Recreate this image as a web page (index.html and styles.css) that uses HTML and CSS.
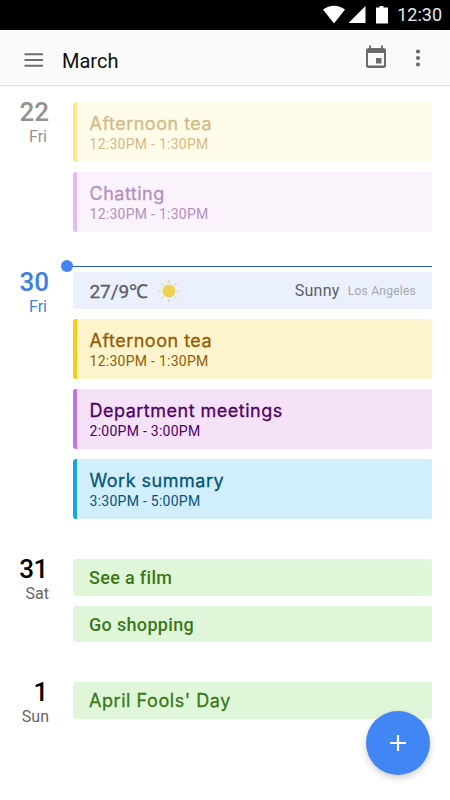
FILE: index.html
```html
<!DOCTYPE html>
<html lang="en">
<head>
<meta charset="utf-8">
<title>March</title>
<link rel="stylesheet" href="styles.css">
</head>
<body>
<div class="status">
  <svg class="signals" width="68" height="20" viewBox="0 0 68 20"><g fill="#fff"><path d="M0 4.500C6.500-.6 15.500-.6 22 4.500L11 18.500Z"/><path d="M42.500 1v17H25.500Z"/><path d="M56.500 1h4v1.500H65V18.500H53V2.500h3.500Z"/></g></svg>
  <span class="clock">12:30</span>
</div>
<header class="appbar">
  <svg class="menu" width="20" height="14" viewBox="0 0 20 14"><path d="M.500 1.300h18.500M.500 7h18.500M.500 12.700h18.500" stroke="#707070" stroke-width="2"/></svg>
  <h1 class="month">March</h1>
  <svg class="today" width="22" height="24" viewBox="0 0 22 24"><path fill="#6b6b6b" fill-rule="evenodd" d="M4 .5h2V3h10V.5H18V3h.500A2.500 2.500 0 0 1 21 5.500v15A2.500 2.500 0 0 1 18.500 23h-15A2.500 2.500 0 0 1 1 20.500v-15A2.500 2.500 0 0 1 3.500 3H4ZM3 8v12.500h16V8ZM11 13h5.500v5.500H11Z"/></svg>
  <svg class="more" width="6" height="18" viewBox="0 0 6 18"><g fill="#6b6b6b"><circle cx="3" cy="2.500" r="2.100"/><circle cx="3" cy="9" r="2.100"/><circle cx="3" cy="15.500" r="2.100"/></g></svg>
</header>
<main class="agenda">
  <section class="day past">
    <div class="date"><b class="num">22</b><span class="name">Fri</span></div>
    <div class="events">
      <article class="event yellow"><h2 class="title">Afternoon tea</h2><p class="time">12:30PM - 1:30PM</p></article>
      <article class="event purple"><h2 class="title">Chatting</h2><p class="time">12:30PM - 1:30PM</p></article>
    </div>
  </section>
  <section class="day current">
    <div class="now"></div>
    <div class="date"><b class="num">30</b><span class="name">Fri</span></div>
    <div class="events">
      <div class="weather">
        <span class="temp">27/9℃</span>
        <svg width="24" height="24" viewBox="0 0 24 24"><circle cx="12" cy="12" r="6.500" fill="#efd052"/><path d="M12 1v3M12 20v3M1 12h3M20 12h3M4.200 4.200l2.100 2.100M17.700 17.700l2.100 2.100M4.200 19.800l2.100-2.100M17.700 6.300l2.100-2.100" stroke="#ecd681" stroke-width="1.200"/></svg>
        <span class="sky">Sunny</span><span class="city">Los Angeles</span>
      </div>
      <article class="event yellow"><h2 class="title">Afternoon tea</h2><p class="time">12:30PM - 1:30PM</p></article>
      <article class="event purple"><h2 class="title">Department meetings</h2><p class="time">2:00PM - 3:00PM</p></article>
      <article class="event blue"><h2 class="title">Work summary</h2><p class="time">3:30PM - 5:00PM</p></article>
    </div>
  </section>
  <section class="day">
    <div class="date wide"><b class="num">31</b><span class="name">Sat</span></div>
    <div class="events">
      <article class="allday">See a film</article>
      <article class="allday">Go shopping</article>
    </div>
  </section>
  <section class="day">
    <div class="date wide"><b class="num">1</b><span class="name">Sun</span></div>
    <div class="events">
      <article class="allday round">April Fools' Day</article>
    </div>
  </section>
</main>
<button class="fab" aria-label="Add event"><svg width="16" height="16" viewBox="0 0 16 16"><path d="M8 0v16M0 8h16" stroke="#fff" stroke-width="2.200"/></svg></button>
</body>
</html>
```
FILE: styles.css
```css
* { box-sizing: border-box; margin: 0; padding: 0; }
body { width: 450px; height: 800px; overflow: hidden; background: #fff; font-family: Roboto, "Liberation Sans", sans-serif; }
.status { height: 30px; background: #000; display: flex; align-items: center; justify-content: flex-end; padding-right: 8px; }
.signals { margin-right: 6px; }
.clock { color: #e8e8e8; font-size: 18px; line-height: 30px; }
.appbar { height: 56px; background: #fafafa; border-bottom: 1px solid #dedede; display: flex; align-items: center; padding: 0 29px 0 24px; }
.menu { margin-top: 4px; }
.month { flex: 1; margin: 7px 0 0 18px; font-size: 20px; font-weight: 400; line-height: 28px; color: #111; }
.today { margin: -1px 28px 0 0; }
.agenda { padding: 16px 18px 0 0; }
.day { position: relative; display: flex; margin-bottom: 40px; }
.date { width: 73px; padding-right: 24px; text-align: right; color: #000; }
.num { display: block; margin-top: -1px; font-size: 26px; line-height: 22px; font-weight: 500; }
.name { display: block; padding-right: 2px; font-size: 16px; line-height: 20px; margin-top: 4px; color: #666; }
.wide .num { padding-right: 1px; letter-spacing: -.4px; }
.wide .name { padding-right: 0; }
.past .date, .past .name { color: #929292; }
.current .date, .current .name { color: #3f80e4; }
.now { position: absolute; left: 67px; right: 0; top: -6px; height: 1px; background: #2862b4; }
.now::before { content: ""; position: absolute; left: -6px; top: -6px; width: 12px; height: 12px; border-radius: 50%; background: #4285f4; }
.events { flex: 1; display: flex; flex-direction: column; gap: 10px; }
.event { height: 60px; padding: 10px 0 0 12.500px; border-left: 4px solid; border-radius: 3px 2px 2px 3px; }
.title { font-family: Inter, Roboto, sans-serif; font-size: 18px; line-height: 23px; font-weight: 400; letter-spacing: .5px; -webkit-text-stroke: .3px currentColor; }
.time { margin-top: .5px; font-size: 14px; line-height: 17px; letter-spacing: .27px; }
.yellow { background: #fdf3cc; border-color: #f8cc18; color: #945c05; }
.purple { background: #f5e2f8; border-color: #c275dc; color: #500067; }
.blue { background: #d1eefd; border-color: #15a6e8; color: #045579; }
.past .yellow { background: #fffbe9; border-color: #fce68a; color: #d5ba86; }
.past .purple { background: #faf3fc; border-color: #e1bcec; color: #b48fc0; }
.weather { height: 37px; background: #ebf0fe; border-radius: 2px; display: flex; align-items: center; padding: 0 16px 0 16.500px; color: #5d5e63; }
.temp { font-size: 19px; margin-right: 9.500px; letter-spacing: -.1px; -webkit-text-stroke: .3px currentColor; }
.sky { margin-left: auto; font-size: 16px; letter-spacing: .3px; }
.city { margin-left: 8px; font-size: 12px; letter-spacing: .25px; color: #a5a8af; }
.allday { height: 36.700px; padding-left: 16px; background: #dff7d8; border-radius: 3px; color: #39771a; font-size: 18px; font-weight: 500; line-height: 37.500px; letter-spacing: .33px; }
.round { font-family: Inter, Roboto, sans-serif; font-weight: 400; letter-spacing: .55px; -webkit-text-stroke: .3px currentColor; }
.fab { position: absolute; left: 366px; top: 711px; width: 64px; height: 64px; border: 0; border-radius: 50%; background: #4285f4; display: flex; align-items: center; justify-content: center; box-shadow: 0 3px 7px rgba(0,0,0,.2); }
```
